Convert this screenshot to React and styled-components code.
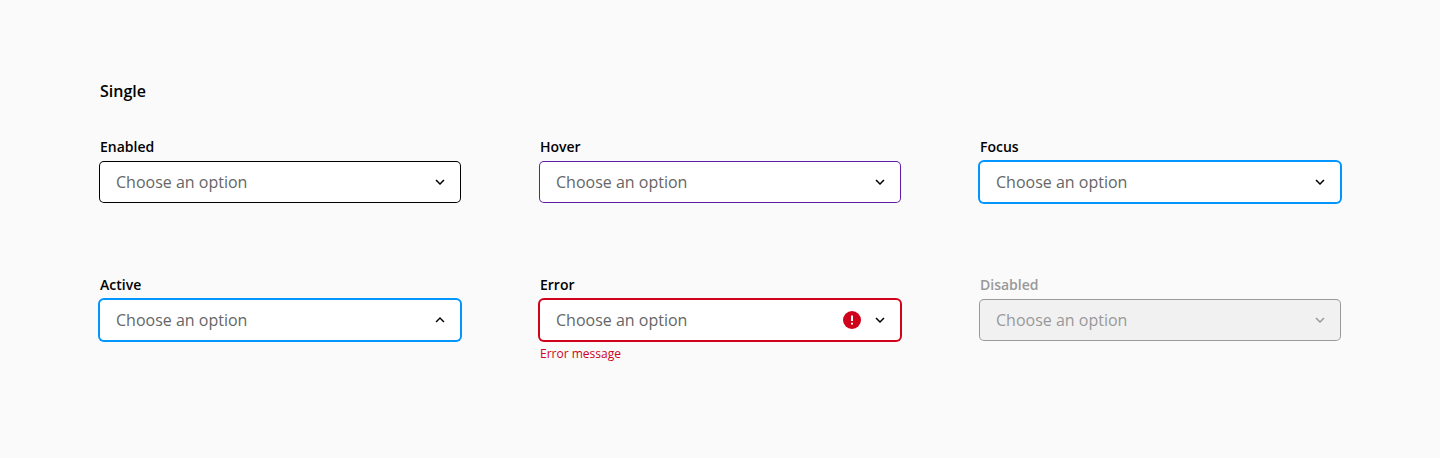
import React from "react";
import styled, { createGlobalStyle } from "styled-components";

const GlobalStyle = createGlobalStyle`
  * { box-sizing: border-box; }
  body {
    margin: 0;
    background: #fafafa;
    font-family: "Open Sans", sans-serif;
    color: #000;
    -webkit-font-smoothing: antialiased;
  }
`;

const Page = styled.main`
  height: 458px;
  padding: 79px 100px 0;
`;

const Title = styled.h1`
  margin: 0;
  font-size: 16px;
  font-weight: 600;
  line-height: 24px;
`;

const Grid = styled.section`
  display: grid;
  grid-template-columns: repeat(3, 360px);
  grid-auto-rows: 138px;
  column-gap: 80px;
  margin-top: 33px;
`;

const Field = styled.div`
  display: flex;
  flex-direction: column;
  color: ${({ $disabled }) => ($disabled ? "#999" : "#000")};
`;

const Label = styled.label`
  font-size: 14px;
  font-weight: 600;
  line-height: 21px;
  margin-bottom: 5px;
`;

const borders = {
  enabled: "0 0 0 1px #000",
  hover: "0 0 0 1px #5c1cac",
  focus: "0 0 0 2px #0095ff",
  error: "0 0 0 2px #d0011b",
  disabled: "0 0 0 1px #999",
};

const Select = styled.div`
  display: flex;
  align-items: center;
  height: 40px;
  padding: 0 11px 0 16px;
  border-radius: 4px;
  background: ${({ $state }) => ($state === "disabled" ? "#f1f1f1" : "#fff")};
  box-shadow: ${({ $state }) => borders[$state]};
`;

const Placeholder = styled.span`
  flex: 1;
  font-size: 16px;
  line-height: 24px;
  color: ${({ $disabled }) => ($disabled ? "#999" : "#666")};
`;

const ErrorIcon = styled.svg`
  margin-right: 9px;
`;

const Chevron = styled.svg`
  transform: ${({ $up }) => ($up ? "rotate(180deg)" : "none")};
`;

const Message = styled.span`
  margin-top: 5px;
  font-size: 12px;
  line-height: 18px;
  color: #d0011b;
`;

const fields = [
  { label: "Enabled", state: "enabled" },
  { label: "Hover", state: "hover" },
  { label: "Focus", state: "focus" },
  { label: "Active", state: "focus", open: true },
  { label: "Error", state: "error", message: "Error message" },
  { label: "Disabled", state: "disabled" },
];

function SelectField({ label, state, open, message }) {
  const disabled = state === "disabled";
  return (
    <Field $disabled={disabled}>
      <Label>{label}</Label>
      <Select $state={state}>
        <Placeholder $disabled={disabled}>Choose an option</Placeholder>
        {message && (
          <ErrorIcon width="20" height="20" viewBox="0 0 20 20">
            <circle cx="10" cy="10" r="9" fill="#d0011b" />
            <path d="M9 5.5h2v5.4H9zM9 12.7h2v1.9H9z" fill="#fff" />
          </ErrorIcon>
        )}
        <Chevron $up={open} width="18" height="18" viewBox="0 0 24 24">
          <path d="M16.59 8.59 12 13.17 7.41 8.59 6 10l6 6 6-6z" fill="currentColor" />
        </Chevron>
      </Select>
      {message && <Message>{message}</Message>}
    </Field>
  );
}

export default function App() {
  return (
    <Page>
      <GlobalStyle />
      <Title>Single</Title>
      <Grid>
        {fields.map((field) => (
          <SelectField key={field.label} {...field} />
        ))}
      </Grid>
    </Page>
  );
}
